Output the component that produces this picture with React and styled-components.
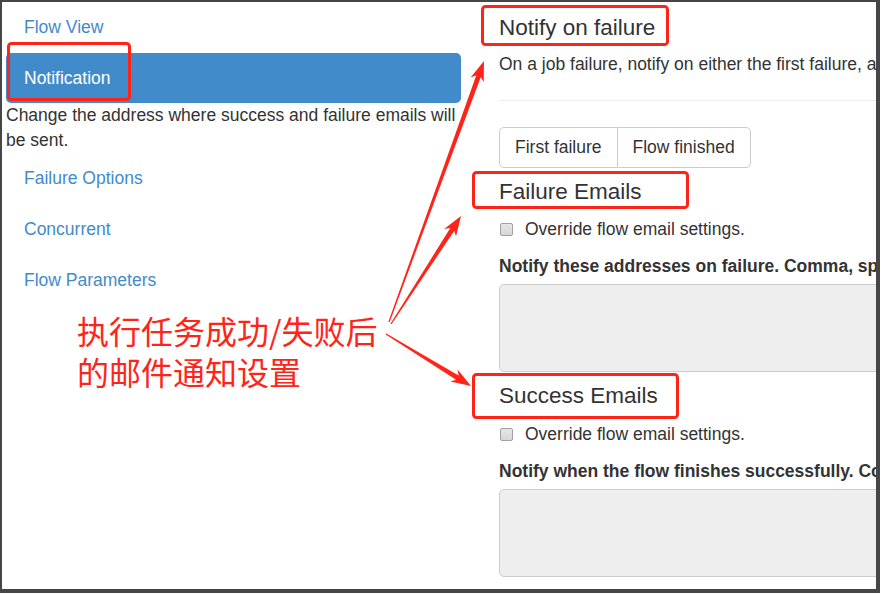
import React from "react";
import styled, { createGlobalStyle } from "styled-components";

const Global = createGlobalStyle`
  html, body { margin: 0; padding: 0; background: #fff; }
  body { font-family: "Liberation Sans", Arial, sans-serif; color: #333; }
  * { box-sizing: border-box; }
`;

const Page = styled.div`
  position: relative;
  width: 882px;
  height: 594px;
  background: #fff;
  overflow: hidden;
`;

const Frame = styled.div`
  width: 880px;
  height: 593px;
  border-style: solid;
  border-color: #464646;
  border-width: 2px 4px 4px 2px;
  overflow: hidden;
  display: grid;
  grid-template-columns: 455px 600px;
  column-gap: 38px;
  padding-left: 4px;
  font-size: 17.5px;
  line-height: 25px;
`;

const Nav = styled.ul`
  list-style: none;
  margin: 0;
  padding: 0;
  display: flex;
  flex-direction: column;
`;

const NavItem = styled.li`
  margin-top: ${(p) => (p.$first ? "0" : "1px")};
`;

const NavLink = styled.a`
  display: block;
  padding: 12.5px 18px;
  line-height: 25px;
  border-radius: 5px;
  text-decoration: none;
  color: ${(p) => (p.$active ? "#fff" : "#428bca")};
  background: ${(p) => (p.$active ? "#428bca" : "transparent")};
`;

const NavDesc = styled.p`
  margin: 0;
  line-height: 24.5px;
  color: #333;
`;

const Main = styled.div`
  display: flex;
  flex-direction: column;
  align-items: flex-start;
  width: 600px;
`;

const Title = styled.h4`
  font-size: 22.5px;
  font-weight: 500;
  line-height: 25px;
  margin: ${(p) => p.$mt}px 0 ${(p) => p.$mb}px;
  color: #333;
  white-space: nowrap;
`;

const Lead = styled.p`
  margin: 0;
  white-space: nowrap;
`;

const Rule = styled.hr`
  align-self: stretch;
  border: 0;
  border-top: 1px solid #eee;
  margin: 23px 0 26px;
  height: 0;
`;

const BtnGroup = styled.div`
  display: inline-flex;
`;

const Btn = styled.button`
  font: inherit;
  font-size: 17.5px;
  line-height: 25px;
  color: #333;
  background: #fff;
  border: 1px solid #ccc;
  padding: 7.5px 15px 6.5px;
  margin-left: ${(p) => (p.$first ? "0" : "-1px")};
  border-radius: ${(p) => (p.$first ? "5px 0 0 5px" : "0 5px 5px 0")};
`;

const CheckRow = styled.label`
  display: flex;
  align-items: center;
  line-height: 25px;
  margin: 0 0 12px;
  white-space: nowrap;
`;

const Box = styled.span`
  display: inline-block;
  width: 13px;
  height: 13px;
  margin: 0 12px 0 1px;
  border: 1px solid #a0a0a0;
  border-radius: 2px;
  background: linear-gradient(#e6e6e6, #d6d6d6);
`;

const FieldLabel = styled.div`
  font-weight: bold;
  line-height: 25px;
  margin-bottom: 5px;
  white-space: nowrap;
`;

const Area = styled.div`
  align-self: stretch;
  height: 88px;
  background: #eee;
  border: 1px solid #ccc;
  border-radius: 5px;
`;

const Overlay = styled.svg`
  position: absolute;
  left: 0;
  top: 0;
  pointer-events: none;
`;

const Note = styled.div`
  position: absolute;
  left: 77px;
  top: 310px;
  font-family: "Noto Sans CJK SC", "Liberation Sans", sans-serif;
  font-size: 32px;
  line-height: 41px;
  color: #ff2418;
  white-space: nowrap;
`;

const NoteLine = styled.div`
  height: 41px;
`;

const RED = "#ff2418";

function arrow(sx, sy, tx, ty) {
  const dx = tx - sx;
  const dy = ty - sy;
  const L = Math.hypot(dx, dy);
  const ux = dx / L;
  const uy = dy / L;
  const nx = -uy;
  const ny = ux;
  const hl = 20;
  const bx = tx - ux * hl;
  const by = ty - uy * hl;
  const bx2 = tx - ux * (hl - 4);
  const by2 = ty - uy * (hl - 4);
  const w0 = 0.6;
  const w1 = 2.4;
  const hw = 7;
  const pts = [
    [sx + nx * w0, sy + ny * w0],
    [bx2 + nx * w1, by2 + ny * w1],
    [bx + nx * hw, by + ny * hw],
    [tx, ty],
    [bx - nx * hw, by - ny * hw],
    [bx2 - nx * w1, by2 - ny * w1],
    [sx - nx * w0, sy - ny * w0],
  ];
  return pts.map((p) => p.map((v) => v.toFixed(1)).join(",")).join(" ");
}

function Section({ title, label }) {
  return (
    <>
      <Title $mt={11} $mb={13.5}>{title}</Title>
      <CheckRow>
        <Box />
        Override flow email settings.
      </CheckRow>
      <FieldLabel>{label}</FieldLabel>
      <Area />
    </>
  );
}

export default function App() {
  const items = ["Flow View", "Notification", "Failure Options", "Concurrent", "Flow Parameters"];
  return (
    <Page>
      <Global />
      <Frame>
        <Nav>
          {items.map((it, i) => (
            <NavItem key={it} $first={i === 0}>
              <NavLink $active={it === "Notification"}>{it}</NavLink>
              {it === "Notification" && (
                <NavDesc>Change the address where success and failure emails will be sent.</NavDesc>
              )}
            </NavItem>
          ))}
        </Nav>
        <Main>
          <Title $mt={12.5} $mb={12}>Notify on failure</Title>
          <Lead>On a job failure, notify on either the first failure, and/or when the failed flow finishes.</Lead>
          <Rule />
          <BtnGroup>
            <Btn $first>First failure</Btn>
            <Btn>Flow finished</Btn>
          </BtnGroup>
          <Section
            title="Failure Emails"
            label="Notify these addresses on failure. Comma, space or semi-colon delimited list."
          />
          <Section
            title="Success Emails"
            label="Notify when the flow finishes successfully. Comma, space or semi-colon delimited list."
          />
        </Main>
      </Frame>
      <Overlay width="882" height="594" viewBox="0 0 882 594">
        <g fill="none" stroke={RED} strokeWidth="3">
          <rect x="8.5" y="43.5" width="121" height="56" rx="3" />
          <rect x="482.5" y="6.5" width="185" height="38" rx="3" />
          <rect x="473.5" y="172.5" width="214" height="35" rx="3" />
          <rect x="473.5" y="374.5" width="204" height="43" rx="3" />
        </g>
        <g fill={RED}>
          <polygon points={arrow(389, 322, 484, 61)} />
          <polygon points={arrow(391, 324, 461, 216)} />
          <polygon points={arrow(386, 334, 471, 386)} />
        </g>
      </Overlay>
      <Note>
        <NoteLine>执行任务成功/失败后</NoteLine>
        <NoteLine>的邮件通知设置</NoteLine>
      </Note>
    </Page>
  );
}
